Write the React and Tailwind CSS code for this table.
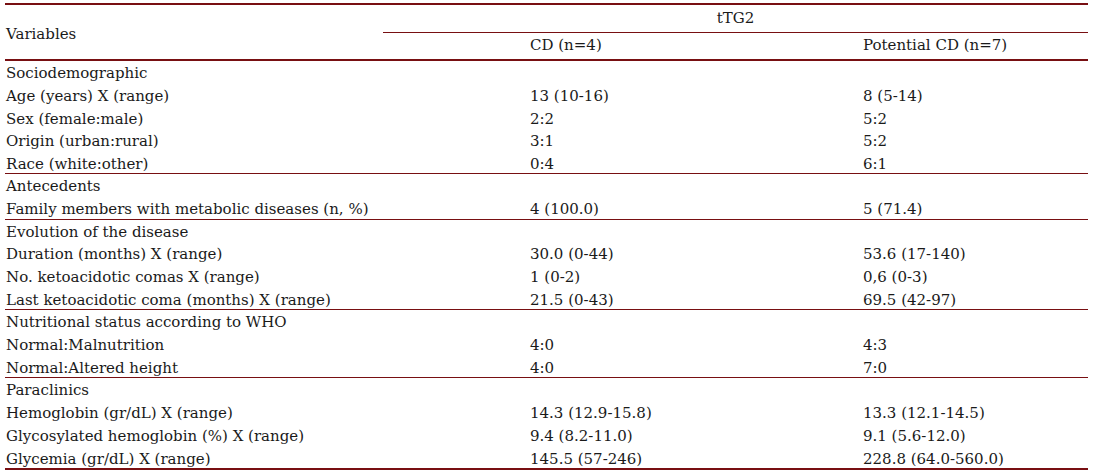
const sections = [
  {
    title: 'Sociodemographic',
    rows: [
      ['Age (years) X (range)', '13 (10-16)', '8 (5-14)'],
      ['Sex (female:male)', '2:2', '5:2'],
      ['Origin (urban:rural)', '3:1', '5:2'],
      ['Race (white:other)', '0:4', '6:1'],
    ],
  },
  {
    title: 'Antecedents',
    rows: [['Family members with metabolic diseases (n, %)', '4 (100.0)', '5 (71.4)']],
  },
  {
    title: 'Evolution of the disease',
    rows: [
      ['Duration (months) X (range)', '30.0 (0-44)', '53.6 (17-140)'],
      ['No. ketoacidotic comas X (range)', '1 (0-2)', '0,6 (0-3)'],
      ['Last ketoacidotic coma (months) X (range)', '21.5 (0-43)', '69.5 (42-97)'],
    ],
  },
  {
    title: 'Nutritional status according to WHO',
    rows: [
      ['Normal:Malnutrition', '4:0', '4:3'],
      ['Normal:Altered height', '4:0', '7:0'],
    ],
  },
  {
    title: 'Paraclinics',
    rows: [
      ['Hemoglobin (gr/dL) X (range)', '14.3 (12.9-15.8)', '13.3 (12.1-14.5)'],
      ['Glycosylated hemoglobin (%) X (range)', '9.4 (8.2-11.0)', '9.1 (5.6-12.0)'],
      ['Glycemia (gr/dL) X (range)', '145.5 (57-246)', '228.8 (64.0-560.0)'],
    ],
  },
];

function Section({ title, rows, last }) {
  return (
    <div className={last ? 'border-b-2 border-[#780f12] pt-px' : 'border-b border-[#780f12] pt-px'}>
      <div className="leading-[22.8px] pl-px">{title}</div>
      {rows.map(([label, cd, pot], i) => (
        <div
          key={label}
          className={
            i === rows.length - 1
              ? 'grid grid-cols-[525px_333px_1fr] leading-[22.8px] mb-[-2.5px]'
              : 'grid grid-cols-[525px_333px_1fr] leading-[22.8px]'
          }
        >
          <div className="pl-px whitespace-nowrap">{label}</div>
          <div className="whitespace-nowrap">{cd}</div>
          <div className="whitespace-nowrap">{pot}</div>
        </div>
      ))}
    </div>
  );
}

export default function App() {
  return (
    <div className="w-[1093px] h-[473px] bg-white pt-[3px] font-['DejaVu_Serif',serif] text-[15px] text-[#1a1a1a]">
      <div className="ml-[5px] w-[1083px] border-t-2 border-[#780f12]">
        {/* header */}
        <div className="grid grid-cols-[378px_147px_333px_1fr] grid-rows-[28px_26px] border-b-2 border-[#780f12]">
          <div className="row-span-2 flex items-center pl-px pt-[4px]">Variables</div>
          <div className="col-span-3 border-b border-[#780f12] flex items-end justify-center pb-[3px]">tTG2</div>
          <div />
          <div className="flex items-end pb-[3px]">CD (n=4)</div>
          <div className="flex items-end pb-[3px]">Potential CD (n=7)</div>
        </div>
        {sections.map((s, i) => (
          <Section key={s.title} {...s} last={i === sections.length - 1} />
        ))}
      </div>
    </div>
  );
}
